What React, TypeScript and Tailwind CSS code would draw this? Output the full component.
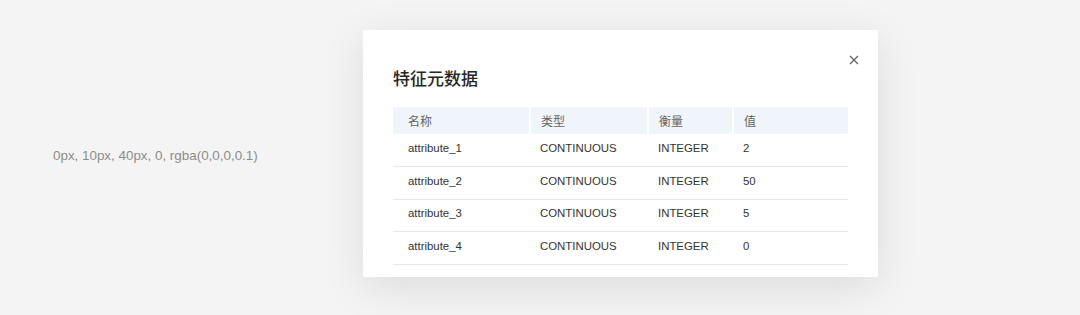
import React from 'react';

const rows = [
  { name: 'attribute_1', type: 'CONTINUOUS', measure: 'INTEGER', value: '2' },
  { name: 'attribute_2', type: 'CONTINUOUS', measure: 'INTEGER', value: '50' },
  { name: 'attribute_3', type: 'CONTINUOUS', measure: 'INTEGER', value: '5' },
  { name: 'attribute_4', type: 'CONTINUOUS', measure: 'INTEGER', value: '0' },
];

const font = { fontFamily: '"Liberation Sans", "Noto Sans CJK SC", sans-serif' };
const cjk = { fontFamily: '"Noto Sans CJK SC", sans-serif' };

export default function App() {
  return (
    <div className="h-[315px] w-[1080px] bg-[#f4f4f4] flex" style={font}>
      {/* shadow spec label */}
      <div className="w-[363px] pl-[53px] pt-[146px] text-[13.4px] text-[#8c8c8c]">
        0px, 10px, 40px, 0, rgba(0,0,0,0.1)
      </div>

      <div className="mt-[30px] w-[515px] h-[247px] bg-white shadow-[0px_10px_40px_0px_rgba(0,0,0,0.1)] relative px-[30px] pt-[35px]">
        <button className="absolute right-[19px] top-[25px] text-[#666]">
          <svg width="10" height="10" viewBox="0 0 10 10" fill="none" stroke="currentColor" strokeWidth={1.4}>
            <path d="M1 1l8 8M9 1L1 9" />
          </svg>
        </button>

        <h3 className="text-[17px] leading-[26px] font-medium text-[#262626]" style={cjk}>
          特征元数据
        </h3>

        <table className="mt-[16px] w-[455px] border-collapse text-[11.4px]">
          <colgroup>
            <col className="w-[137px]" />
            <col className="w-[118px]" />
            <col className="w-[85px]" />
            <col />
          </colgroup>
          <thead>
            <tr className="h-[27px] bg-[#f0f4fb] text-[#666] text-left text-[12px]">
              <th className="font-normal pl-[15px] border-r-2 border-white" style={cjk}>名称</th>
              <th className="font-normal pl-[10px] border-r-2 border-white" style={cjk}>类型</th>
              <th className="font-normal pl-[10px] border-r-2 border-white" style={cjk}>衡量</th>
              <th className="font-normal pl-[10px]" style={cjk}>值</th>
            </tr>
          </thead>
          <tbody className="text-[#333]">
            {rows.map((r) => (
              <tr key={r.name} className="h-[32.5px] border-b border-[#e8e8e8]">
                <td className="pl-[15px] pb-[3px]">{r.name}</td>
                <td className="pl-[10px] pb-[3px]">{r.type}</td>
                <td className="pl-[10px] pb-[3px]">{r.measure}</td>
                <td className="pl-[10px] pb-[3px]">{r.value}</td>
              </tr>
            ))}
          </tbody>
        </table>
      </div>
    </div>
  );
}
